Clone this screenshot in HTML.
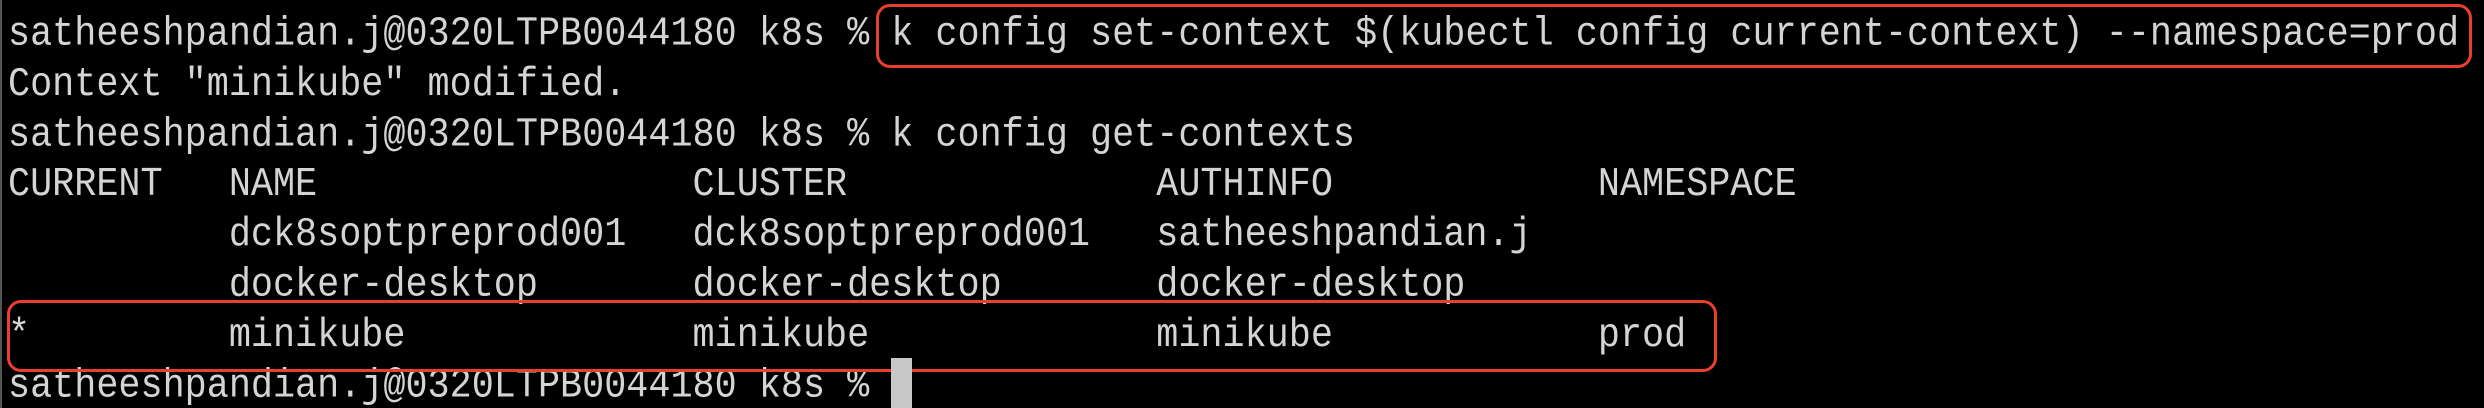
<!DOCTYPE html>
<html><head><meta charset="utf-8"><style>
html,body{margin:0;padding:0;background:#000;width:2484px;height:408px;overflow:hidden;position:relative}
pre{position:absolute;left:8px;top:10px;margin:0;font-family:"Liberation Mono",monospace;font-size:36.8px;line-height:44.8px;color:#d4d4d4;white-space:pre;transform:scaleY(1.12);transform-origin:0 0}
.box{position:absolute;border:3px solid #e8402a;border-radius:14px}
.cur{position:absolute;left:891px;top:358px;width:21px;height:50px;background:#c8c8c8}
.edge{position:absolute;left:0;top:0;width:2px;height:408px;background:#555}
</style></head><body>
<div class="edge"></div>
<pre>satheeshpandian.j@0320LTPB0044180 k8s % k config set-context $(kubectl config current-context) --namespace=prod
Context "minikube" modified.
satheeshpandian.j@0320LTPB0044180 k8s % k config get-contexts
CURRENT   NAME                 CLUSTER              AUTHINFO            NAMESPACE
          dck8soptpreprod001   dck8soptpreprod001   satheeshpandian.j
          docker-desktop       docker-desktop       docker-desktop
*         minikube             minikube             minikube            prod
satheeshpandian.j@0320LTPB0044180 k8s % </pre>
<div class="box" style="left:876px;top:4px;width:1590px;height:58px"></div>
<div class="box" style="left:7px;top:300px;width:1704px;height:66px"></div>
<div class="cur"></div>
</body></html>
